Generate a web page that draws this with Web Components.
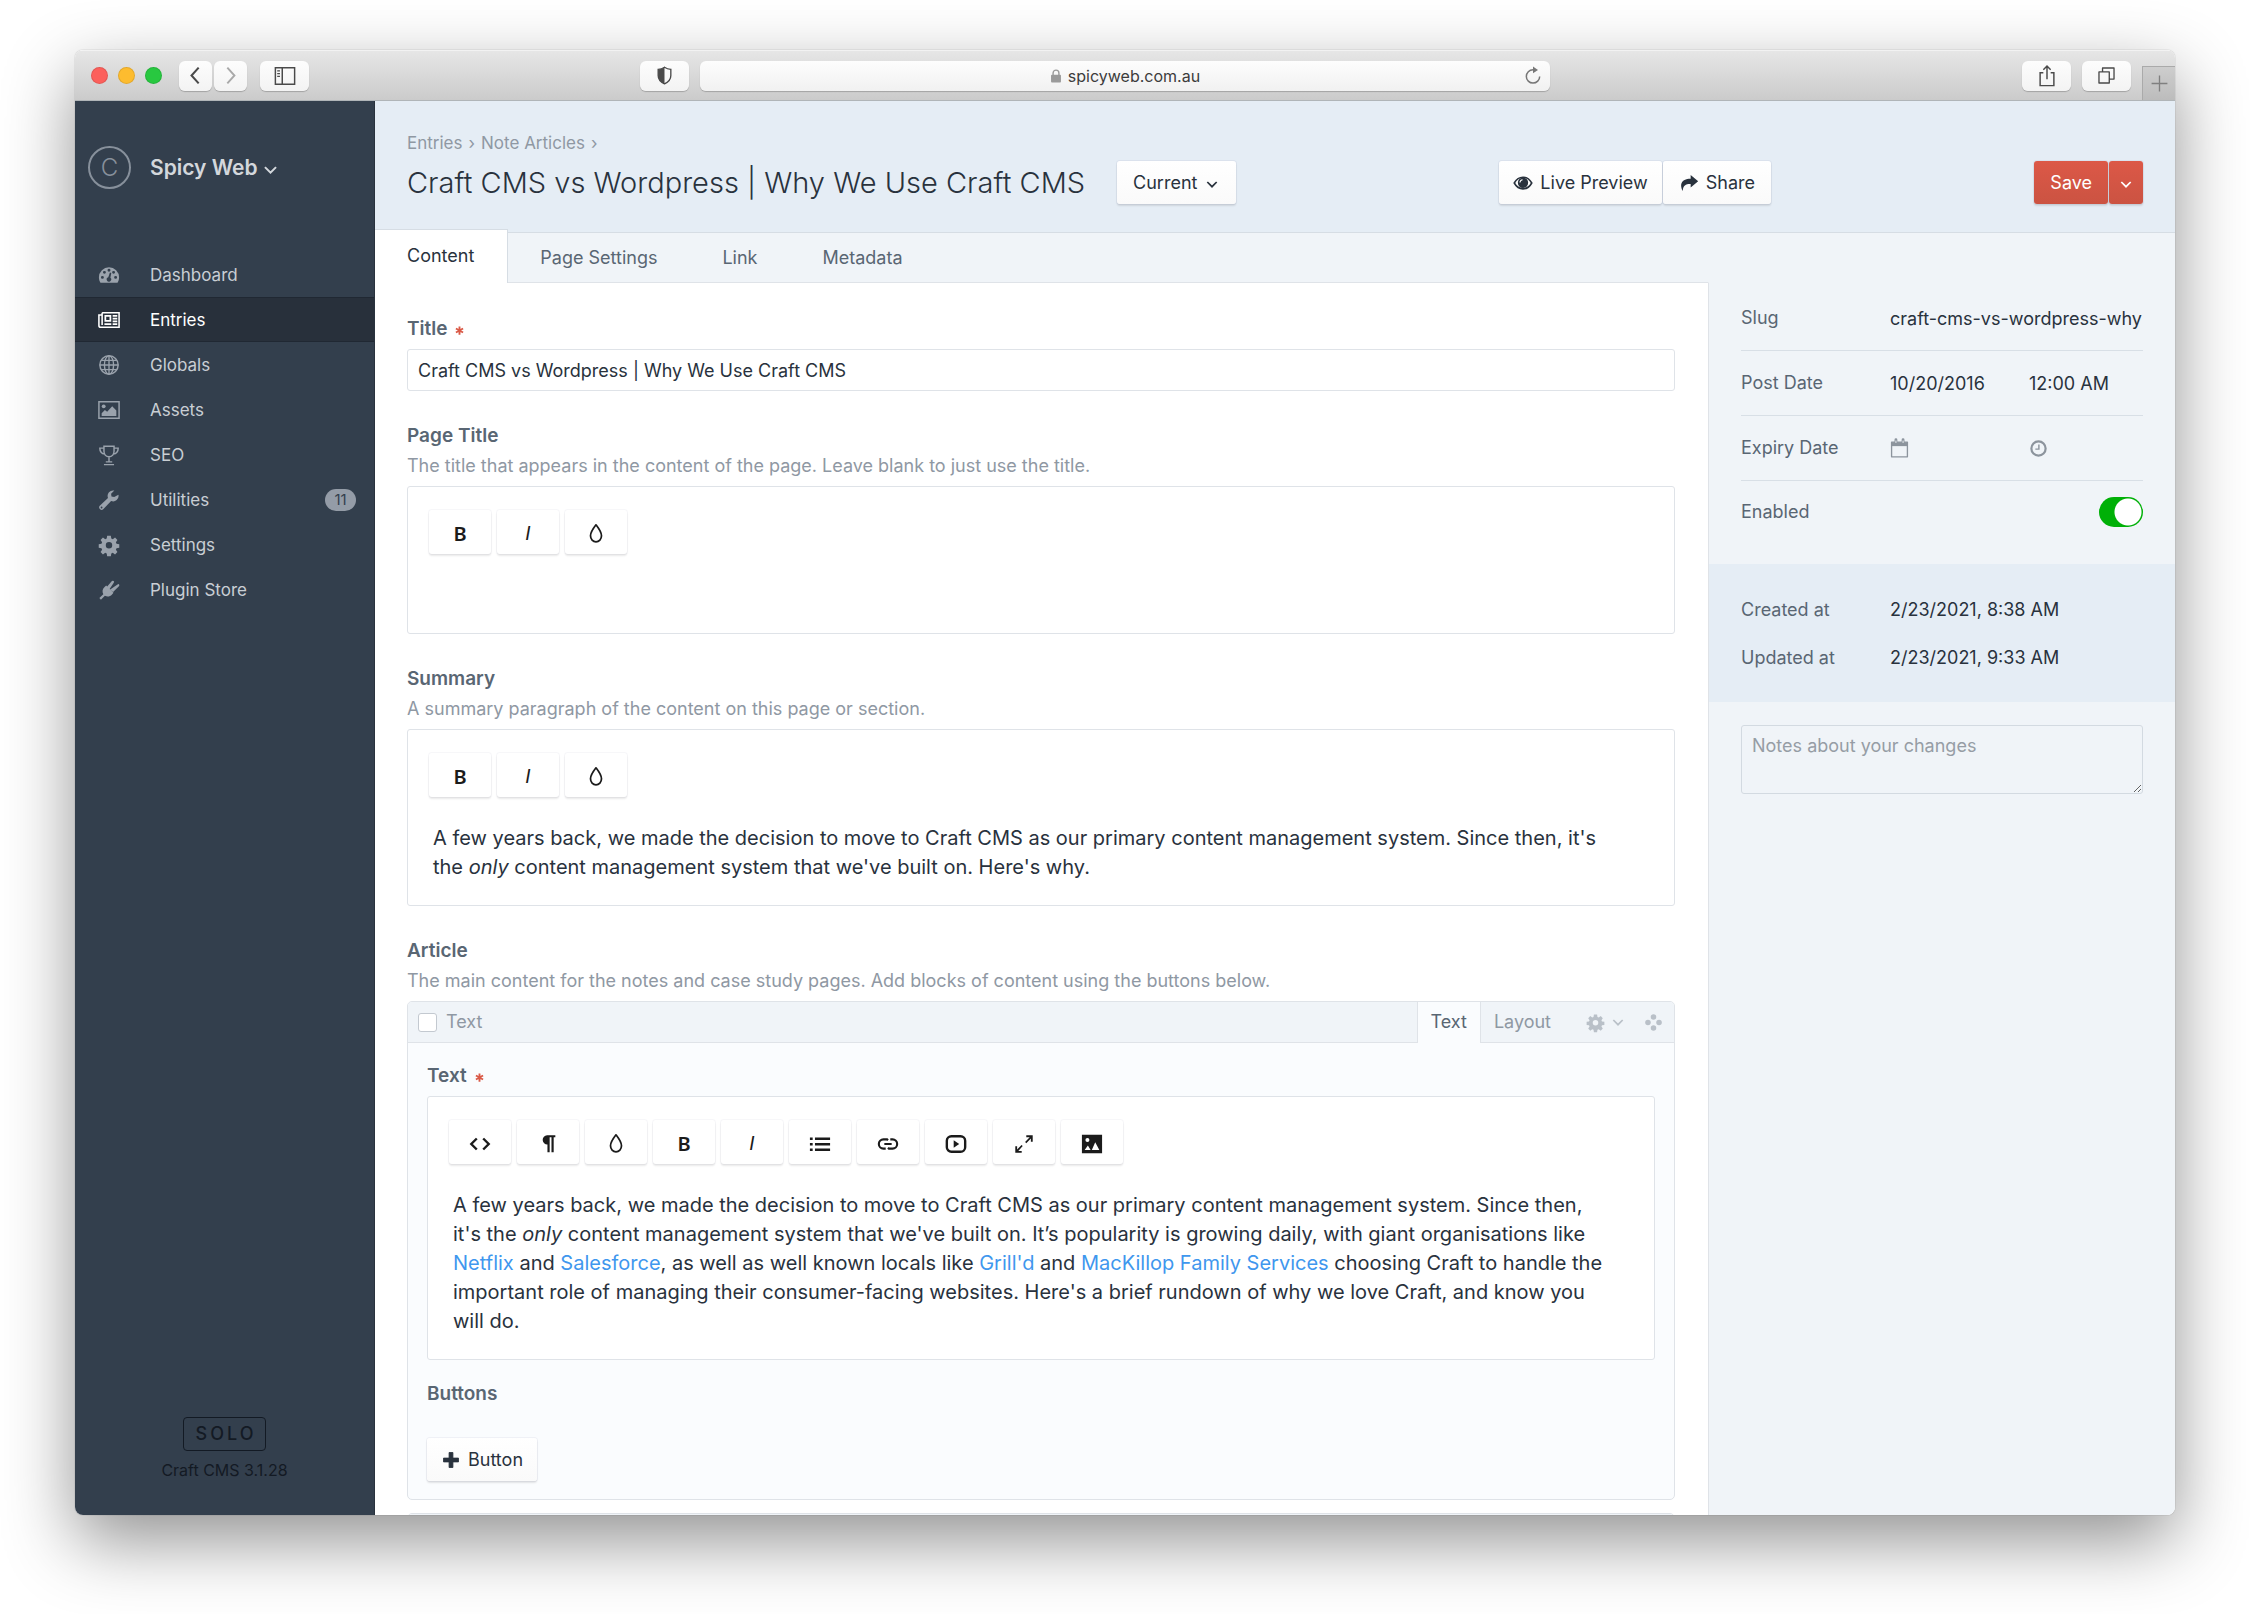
<!DOCTYPE html>
<html lang="en">
<head>
<meta charset="utf-8">
<title>Craft CMS vs Wordpress | Why We Use Craft CMS</title>
<style>
  :root {
    --ink: #29323d;
    --label: #596673;
    --muted: #8f98a3;
    --line: #dfe3e8;
    --panel: #f0f4f8;
    --band: #e5edf5;
    --link: #3f97ee;
    --ui: 18px;
    --body: 20px;
  }
  html, body { margin: 0; height: 100%; }
  body {
    box-sizing: border-box;
    padding: 50px 75px 99px;
    background: #fff;
    color: var(--ink);
    font: 400 var(--ui)/30px Inter, "Liberation Sans", sans-serif;
    overflow: hidden;
  }
</style>
</head>
<body>
<browser-window>
  <browser-toolbar slot="bar" address="spicyweb.com.au"></browser-toolbar>
  <app-sidebar site="Spicy Web" edition="SOLO" version="Craft CMS 3.1.28">
    <nav-item icon="gauge">Dashboard</nav-item>
    <nav-item icon="news" active>Entries</nav-item>
    <nav-item icon="globe">Globals</nav-item>
    <nav-item icon="photo">Assets</nav-item>
    <nav-item icon="trophy">SEO</nav-item>
    <nav-item icon="wrench" badge="11">Utilities</nav-item>
    <nav-item icon="gear">Settings</nav-item>
    <nav-item icon="plug">Plugin Store</nav-item>
  </app-sidebar>
  <entry-page>
    <page-header slot="header" heading="Craft CMS vs Wordpress | Why We Use Craft CMS"></page-header>
    <page-tabs slot="main"></page-tabs>
    <entry-form slot="main">
      <text-field label="Title" required value="Craft CMS vs Wordpress | Why We Use Craft CMS"></text-field>
      <rich-field label="Page Title" hint="The title that appears in the content of the page. Leave blank to just use the title." tools="bold italic drop"></rich-field>
      <rich-field label="Summary" hint="A summary paragraph of the content on this page or section." tools="bold italic drop">A few years back, we made the decision to move to Craft CMS as our primary content management system. Since then, it's the <em>only</em> content management system that we've built on. Here's why.</rich-field>
      <matrix-field label="Article" hint="The main content for the notes and case study pages. Add blocks of content using the buttons below.">
        <matrix-block heading="Text">
          <rich-field label="Text" required tools="code pilcrow drop bold italic list link video expand image">A few years back, we made the decision to move to Craft CMS as our primary content management system. Since then, it's the <em>only</em> content management system that we've built on. It’s popularity is growing daily, with giant organisations like <a href="#netflix">Netflix</a> and <a href="#salesforce">Salesforce</a>, as well as well known locals like <a href="#grilld">Grill'd</a> and <a href="#mackillop">MacKillop Family Services</a> choosing Craft to handle the important role of managing their consumer-facing websites. Here's a brief rundown of why we love Craft, and know you will do.</rich-field>
          <button-field label="Buttons"></button-field>
        </matrix-block>
        <matrix-block></matrix-block>
      </matrix-field>
    </entry-form>
    <entry-details slot="details"></entry-details>
  </entry-page>
</browser-window>

<script>
const BASE = `
  *, *::before, *::after { box-sizing: border-box; }
  :host { display: block; box-sizing: border-box; }
  :host([hidden]) { display: none; }
  button, input, textarea { font: inherit; color: inherit; margin: 0; padding: 0; border: 0; background: none; outline: 0; }
  a { color: inherit; text-decoration: none; }
`;

function element(name, render) {
  customElements.define(name, class extends HTMLElement {
    constructor() {
      super();
      this.attachShadow({ mode: 'open' });
    }
    connectedCallback() {
      if (this.shadowRoot.firstChild) return;
      const attr = (key) => this.getAttribute(key) || '';
      const { css, html } = render(attr, this);
      this.shadowRoot.innerHTML = `<style>${BASE}${css}</style>${html}`;
    }
  });
}

const GEAR = `<path fill-rule="evenodd" d="M10 2h4l.5 3 1.6.7 2.5-1.8 2.6 2.7-1.7 2.5.7 1.6 3 .5v3.8l-3 .5-.7 1.6 1.7 2.5-2.6 2.7-2.5-1.8-1.6.7-.5 3h-4l-.5-3-1.6-.7-2.5 1.8-2.6-2.7 1.7-2.5-.7-1.6-3-.5v-3.8l3-.5.7-1.6-1.7-2.5 2.6-2.7 2.500 1.800 1.600-.7zM12 8.800a3.500 3.500 0 1 0 0 7 3.500 3.500 0 0 0 0-7z"/>`;
const ICONS = {
  chevron: `<path d="M5 9l7 7 7-7" class="s" stroke-width="2.600"/>`,
  back: `<path d="M16 2L7 12l9 10" class="s" stroke-width="2.600"/>`,
  forward: `<path d="M8 2l9 10-9 10" class="s" stroke-width="2.400"/>`,
  sidebar: `<path d="M1.500 3h21v18h-21zM9 3v18" class="s" stroke-width="1.600"/><path d="M3.500 6.500h3M3.500 9.500h3M3.500 12.500h3" class="s" stroke-width="1.300"/>`,
  shield: `<path d="M12 1.500c2.500 1.700 5 2.500 8 2.700V12c0 5-3.500 8.500-8 10.500C7.500 20.500 4 17 4 12V4.200c3-.2 5.500-1 8-2.700z" class="s" stroke-width="1.700"/><path d="M12 1.500v21C7.500 20.500 4 17 4 12V4.200c3-.2 5.500-1 8-2.700z"/>`,
  lock: `<rect x="3.500" y="10" width="17" height="13" rx="1.500"/><path d="M7 11V7a5 5 0 0 1 10 0v4" class="s" stroke-width="2.400"/>`,
  reload: `<path d="M20 12.500a8 8 0 1 1-8-8h1.500" class="s" stroke-width="1.800"/><path d="M12 .5l6 4.300-6 4z"/>`,
  export: `<path d="M8 8.500H4.500V22.500h15V8.500H16M12 15.500V1.500M8 5.200l4-4 4 4" class="s" stroke-width="1.600"/>`,
  windows: `<path d="M2.500 7.500h13v14h-13zM7 7V2.500h14.500v14H16" class="s" stroke-width="1.700" stroke-linejoin="round"/>`,
  plusThin: `<path d="M12 2v20M2 12h20" class="s" stroke-width="1.700"/>`,
  gauge: `<path fill-rule="evenodd" d="M12 3.500A11 11 0 0 0 1 14.500c0 2.300.6 4.300 1.700 6h18.600c1.100-1.700 1.700-3.700 1.700-6A11 11 0 0 0 12 3.500zM4.800 13a1.600 1.600 0 1 1 0 3.200 1.600 1.600 0 0 1 0-3.200zM7 7.500a1.600 1.600 0 1 1 0 3.200 1.600 1.600 0 0 1 0-3.200zM12 5.200a1.600 1.600 0 1 1 0 3.200 1.600 1.600 0 0 1 0-3.200zM17 7.500a1.600 1.600 0 1 1 0 3.200 1.600 1.600 0 0 1 0-3.200zM19.200 13a1.600 1.600 0 1 1 0 3.200 1.600 1.600 0 0 1 0-3.200zM13 9.300l1.500.4-1 5.300a2.400 2.400 0 1 1-2.300-.5z"/>`,
  news: `<path d="M4.500 4H23v16H3a2 2 0 0 1-2-2V6.500h3.500M4.500 4v13.500" class="s" stroke-width="1.700"/><path d="M8 7.500h5.500V13H8z" class="s" stroke-width="1.900"/><path d="M7 16.500h7.500M16 7.500h5M16 10.500h5M16 13.500h5M16 16.500h5" class="s" stroke-width="1.700"/>`,
  globe: `<circle cx="12" cy="12" r="10" class="s" stroke-width="1.600"/><ellipse cx="12" cy="12" rx="5" ry="10" class="s" stroke-width="1.500"/><path d="M12 2v20M2 12h20M3.500 7h17M3.500 17h17" class="s" stroke-width="1.500"/>`,
  photo: `<path d="M1 3h22v18H1z" class="s" stroke-width="1.600"/><circle cx="6.200" cy="8" r="2.100"/><path d="M4 18.500v-3l3.500-3.500 2.500 2L15.500 8l4.500 4.500v6z"/>`,
  trophy: `<path d="M6.500 2.500h11V8c0 3.500-2.500 6-5.500 6s-5.500-2.500-5.500-6zM6.500 4.500H2c0 4 2 6 5.500 6.500M17.500 4.500H22c0 4-2 6-5.500 6.500M12 14v6M8.500 19.500h7M6.500 22.500h11" class="s" stroke-width="1.600"/>`,
  wrench: `<path fill-rule="evenodd" d="M22.300 6.200a6 6 0 0 1-8 6.900l-8.600 9a2.700 2.700 0 0 1-3.800-3.800l9-8.600a6 6 0 0 1 6.900-8l-3.500 3.500.4 3 3 .5zM3.900 19.200a1 1 0 1 0 0 2 1 1 0 0 0 0-2z"/>`,
  gear: GEAR,
  plug: `<path d="M1.500 20.800l4.300-4.300c-1.600-3-.9-5.500 1.400-7.800l1.700-1.600 8 8-1.600 1.700c-2.300 2.300-4.800 3-7.800 1.400l-4.300 4.300zM10 8.200l5.200-5.900a1.300 1.300 0 0 1 2 1.800l-4.500 6.800zM13.300 11.500l6.800-4.600 1.700-1.300a1.300 1.300 0 0 1 1 2.300l-6.300 6.200z"/>`,
  eye: `<path d="M1.500 12C4 7.500 7.800 5 12 5s8 2.500 10.500 7c-2.500 4.500-6.300 7-10.500 7s-8-2.500-10.500-7z" class="s" stroke-width="1.900"/><path fill-rule="evenodd" d="M12 5.500a6.200 6.200 0 1 0 0 12.400 6.200 6.200 0 0 0 0-12.400zM11.500 7.500v1.300A3 3 0 0 0 9 11.500H7.700a4.200 4.200 0 0 1 3.800-4z"/>`,
  share: `<path d="M14 2.500l9 7.500-9 7.500v-4.300C8.500 13 5 14.500 4.500 21.500 1 15 1.500 7 14 6.800z"/>`,
  drop: `<path d="M12 2c3.500 4.500 6 8.300 6 12a6 6.500 0 0 1-12 0c0-3.700 2.500-7.500 6-12z" class="s" stroke-width="1.900" stroke-linejoin="round"/>`,
  code: `<path d="M8.500 6l-6 6 6 6M15.500 6l6 6-6 6" class="s" stroke-width="2.600"/>`,
  pilcrow: `<path d="M11 2.500h9v2.200h-1.800V21h-2.400V4.700h-2V21h-2.400v-8.500A5 5 0 0 1 11 2.500z"/>`,
  list: `<path d="M6.500 5H23v2.500H6.500zM6.500 11H23v2.500H6.500zM6.500 17H23v2.500H6.500zM1 5h3v2.500H1zM1 11h3v2.500H1zM1 17h3v2.500H1z"/>`,
  link: `<path d="M9.500 17H7A5 5 0 0 1 7 7h4l1 1M14.500 7H17a5 5 0 0 1 0 10h-4l-1-1M8 12h8" class="s" stroke-width="2.300"/>`,
  video: `<rect x="2" y="3.500" width="20" height="17" rx="5" class="s" stroke-width="2.600"/><path d="M9.500 8l6 4-6 4z"/>`,
  expand: `<path d="M14.500 2.500h7v7h-2V6l-5 5.200-1.300-1.300L18.200 4.500h-3.700zM9.500 21.500h-7v-7h2V18l4.800-5 1.300 1.300-4.800 5.200h3.700z"/>`,
  image: `<path fill-rule="evenodd" d="M1 2h22v20H1zM7 5.500a2.200 2.200 0 1 0 0 4.400 2.200 2.200 0 0 0 0-4.400zM4 18.500h6.500l-3-5zM11.800 18.500H20L15.500 10z"/>`,
  calendar: `<path d="M2 4h20v18.500H2z" class="s" stroke-width="1.700" stroke-linejoin="round"/><path d="M2 4h20v5H2z"/><path d="M7.500 1v5M16.500 1v5" class="s" stroke-width="3.600" stroke-linecap="round"/><path d="M7.500 2v3M16.500 2v3" stroke="#f0f4f8" stroke-width="1.200"/>`,
  clock: `<circle cx="12" cy="12" r="9" class="s" stroke-width="2.800"/><path d="M12.500 7v5.800H8" class="s" stroke-width="1.800"/>`,
  move: `<circle cx="12" cy="5" r="3.500"/><circle cx="5" cy="12" r="3.500"/><circle cx="19" cy="12" r="3.500"/><circle cx="12" cy="19" r="3.500"/>`,
  plus: `<path d="M9.700 3h4.600v6.700H21v4.600h-6.700V21H9.700v-6.700H3V9.700h6.700z" stroke="currentColor" stroke-width="1" stroke-linejoin="round"/>`,
  asterisk: `<path d="M12 1v22M2.500 6.500l19 11M21.500 6.500l-19 11" class="s" stroke-width="5"/>`,
};

element('ui-icon', (attr) => ({
  css: `
    :host { display: inline-flex; flex: none; width: var(--size, 22px); height: var(--size, 22px); }
    svg { width: 100%; height: 100%; fill: currentColor; overflow: visible; }
    .s { fill: none; stroke: currentColor; }
  `,
  html: `<svg viewBox="0 0 24 24" aria-hidden="true">${ICONS[attr('name')]}</svg>`,
}));

/* ---------- Browser chrome ---------- */

element('browser-window', () => ({
  css: `
    :host { height: 100%; }
    .frame {
      display: flex; flex-direction: column; height: 100%;
      border-radius: 8px; overflow: hidden; background: #fff;
    }
    .shadow { height: 100%; border-radius: 8px; box-shadow: 0 0 1px rgba(0,0,0,.5), 0 26px 70px rgba(0,0,0,.43); }
    .view { flex: 1; min-height: 0; display: flex; }
    ::slotted(entry-page) { flex: 1; min-width: 0; }
  `,
  html: `<div class="shadow"><div class="frame"><slot name="bar"></slot><div class="view"><slot></slot></div></div></div>`,
}));

element('browser-toolbar', (attr) => ({
  css: `
    :host { height: 51px; flex: none; }
    .bar {
      display: grid; grid-template-columns: 1fr 850px 1fr; align-items: center; height: 100%;
      background: linear-gradient(#e6e6e6, #cbcbcb); border-top: 1px solid #f2f2f2; border-bottom: 1px solid #b0b5b8;
      color: #4a4a4a;
    }
    .lights { display: flex; align-items: center; gap: 10px; margin-right: 17px; }
    .lights button { width: 17px; height: 17px; border-radius: 50%; border: 1px solid rgba(0,0,0,.1); }
    .key {
      height: 30px; width: 49px; display: flex; align-items: center; justify-content: center; flex: none;
      border-radius: 6px; background: linear-gradient(#fdfdfd, #f3f3f3); box-shadow: 0 1px 1px rgba(0,0,0,.22);
    }
    .pair { display: flex; gap: 2px; margin-right: 13px; }
    .pair .key { width: 33px; }
    .pair .key + .key { color: #a9a9a9; }
    .left { display: flex; justify-content: space-between; padding: 0 11px 0 16px; }
    .left .group { display: flex; }
    .address {
      height: 30px; display: flex; align-items: center; padding-right: 7px;
      border-radius: 6px; background: linear-gradient(#fdfdfd, #f1f1f1); box-shadow: 0 1px 1px rgba(0,0,0,.22);
    }
    .address label { flex: 1; display: flex; align-items: center; justify-content: center; gap: 5px; padding-left: 26px; color: #9a9a9a; }
    .address input { field-sizing: content; font-size: 16px; line-height: 30px; color: #3c3c3c; }
    .address button { display: flex; color: #777; }
    .right { height: 100%; display: flex; justify-content: flex-end; align-items: center; gap: 11px; }
    .add {
      width: 33px; height: 34px; align-self: flex-end; display: flex; align-items: center; justify-content: center;
      background: rgba(0,0,0,.07); border-top: 1px solid #aaa; border-left: 1px solid #aaa; color: #808080;
    }
    .back { --size: 19px; } .shield { --size: 19px; } .reload { --size: 20px; } .lock { --size: 14px; }
  `,
  html: `<div class="bar">
    <div class="left">
      <div class="group">
        <div class="lights">
          <button aria-label="Close" style="background:#fc605c"></button>
          <button aria-label="Minimise" style="background:#fdbc2f"></button>
          <button aria-label="Zoom" style="background:#28c840"></button>
        </div>
        <div class="pair">
          <button class="key" aria-label="Back"><ui-icon class="back" name="back"></ui-icon></button>
          <button class="key" aria-label="Forward"><ui-icon class="back" name="forward"></ui-icon></button>
        </div>
        <button class="key" aria-label="Show sidebar"><ui-icon name="sidebar"></ui-icon></button>
      </div>
      <button class="key" aria-label="Privacy report"><ui-icon class="shield" name="shield"></ui-icon></button>
    </div>
    <div class="address">
      <label><ui-icon class="lock" name="lock"></ui-icon><input aria-label="Address" size="15" value="${attr('address')}"></label>
      <button aria-label="Reload"><ui-icon class="reload" name="reload"></ui-icon></button>
    </div>
    <div class="right">
      <button class="key" aria-label="Share page"><ui-icon name="export"></ui-icon></button>
      <button class="key" aria-label="Tab overview"><ui-icon class="shield" name="windows"></ui-icon></button>
      <button class="add" aria-label="New tab"><ui-icon class="shield" name="plusThin"></ui-icon></button>
    </div>
  </div>`,
}));

/* ---------- Sidebar ---------- */

element('app-sidebar', (attr) => ({
  css: `
    :host { width: 300px; flex: none; }
    .side {
      height: 100%; display: flex; flex-direction: column; padding: 45px 0 33px;
      background: #333f4d; border-right: 1px solid #29323d; color: #c9ced4;
    }
    .site { display: flex; align-items: center; height: 43px; margin: 0 13px 63px; font-size: 21px; font-weight: 600; color: #d3d7dc; }
    .mark {
      width: 43px; height: 43px; margin-right: 19px; border: 2px solid #87909b; border-radius: 50%;
      display: flex; align-items: center; justify-content: center; font-weight: 300; font-size: 24px; color: #87909b;
    }
    .site ui-icon { --size: 19px; margin: 4px 0 0 3px; }
    .foot { margin-top: auto; display: flex; flex-direction: column; align-items: center; gap: 7px; color: #131a24; font-size: 16px; line-height: 24px; }
    .foot b { padding: 4px 9px 4px 12px; border: 1px solid #131a24; border-radius: 4px; font-size: 18px; font-weight: 500; letter-spacing: 3px; }
  `,
  html: `<div class="side">
    <a class="site" href="#site"><span class="mark">C</span>${attr('site')}<ui-icon name="chevron"></ui-icon></a>
    <nav><slot></slot></nav>
    <div class="foot"><b>${attr('edition')}</b><span>${attr('version')}</span></div>
  </div>`,
}));

element('nav-item', (attr) => ({
  css: `
    a { display: flex; align-items: center; height: 45px; padding: 0 18px 0 23px; border: solid transparent; border-width: 1px 0; font-size: 17px; }
    ui-icon { color: #9aa2ac; margin-right: 30px; }
    :host([active]) a { background: #28303b; border-color: #202833; color: #fff; }
    :host([active]) ui-icon { color: #fff; }
    .badge { margin-left: auto; min-width: 31px; height: 22px; padding: 0 8px; border-radius: 11px; background: #949ca7; color: #333f4d; font-size: 15px; line-height: 22px; text-align: center; }
  `,
  html: `<a href="#${attr('icon')}"><ui-icon name="${attr('icon')}"></ui-icon><slot></slot>${attr('badge') ? `<span class="badge">${attr('badge')}</span>` : ''}</a>`,
}));

/* ---------- Page layout ---------- */

element('entry-page', () => ({
  css: `
    .page { height: 100%; display: flex; flex-direction: column; background: var(--panel); }
    .columns { flex: 1; min-height: 0; display: flex; }
    .main { flex: 1; min-width: 0; display: flex; flex-direction: column; }
    .details { width: 466px; flex: none; }
  `,
  html: `<div class="page"><slot name="header"></slot><div class="columns"><div class="main"><slot name="main"></slot></div><div class="details"><slot name="details"></slot></div></div></div>`,
}));

element('ui-button', (attr) => ({
  css: `
    button {
      display: flex; align-items: center; justify-content: center; gap: 7px; height: 43px; padding: 0 var(--pad, 16px);
      border-radius: 3px; background: linear-gradient(#fff, #fafafa); white-space: nowrap;
      box-shadow: 0 0 0 1px rgba(49,49,93,.05), 0 2px 2px rgba(0,0,0,.1);
    }
    ui-icon { --size: 20px; }
    .caret { --size: 16px; margin-top: 3px; }
    :host([primary]) button { background: linear-gradient(#dc5847, #cb5342); color: #fff; }
  `,
  html: `<button${attr('label') ? ` aria-label="${attr('label')}"` : ''}>${attr('icon') ? `<ui-icon name="${attr('icon')}"></ui-icon>` : ''}<slot></slot>${attr('caret') ? '<ui-icon class="caret" name="chevron"></ui-icon>' : ''}</button>`,
}));

element('page-header', (attr) => ({
  css: `
    header { padding: 28px 32px; background: var(--band); border-bottom: 1px solid #d6dde4; }
    .crumbs { display: flex; gap: 6px; line-height: 28px; font-size: 17px; color: var(--muted); margin-bottom: 4px; }
    .row { display: flex; align-items: center; height: 43px; }
    .heading { flex: 1; min-width: 0; display: flex; align-items: center; gap: 32px; }
    h1 { margin: 0; font-size: 29px; line-height: 43px; font-weight: 300; white-space: nowrap; }
    .group { display: flex; gap: 1px; }
    .save { width: 372px; justify-content: flex-end; }
  `,
  html: `<header>
    <nav class="crumbs"><a href="#entries">Entries</a><span>›</span><a href="#notes">Note Articles</a><span>›</span></nav>
    <div class="row">
      <div class="heading"><h1>${attr('heading')}</h1><ui-button caret="yes">Current</ui-button></div>
      <div class="group"><ui-button icon="eye" style="--pad:14px">Live Preview</ui-button><ui-button icon="share">Share</ui-button></div>
      <div class="group save"><ui-button primary>Save</ui-button><ui-button primary caret="yes" label="More save options" style="--pad:9px"></ui-button></div>
    </div>
  </header>`,
}));

element('page-tabs', () => ({
  css: `
    :host { flex: none; }
    nav { display: flex; height: 50px; border-bottom: 1px solid var(--line); border-right: 1px solid transparent; line-height: 49px; color: var(--label); font-size: 18px; }
    a { padding: 0 33px 0 32px; }
    .on { margin: -4px 0 -1px; padding-bottom: 1px; background: #fff; color: var(--ink); border: solid #d6dde4; border-width: 1px 1px 0 0; line-height: 52px; }
  `,
  html: `<nav><a class="on" href="#content">Content</a><a href="#settings">Page Settings</a><a href="#link">Link</a><a href="#metadata">Metadata</a></nav>`,
}));

element('entry-form', () => ({
  css: `
    :host { flex: 1; min-height: 0; }
    form { height: 100%; overflow: hidden; display: flex; flex-direction: column; gap: 30px; padding: 31px 33px 0 32px; background: #fff; border-right: 1px solid var(--line); }
    ::slotted(*) { flex: none; }
  `,
  html: `<form><slot></slot></form>`,
}));

/* ---------- Fields ---------- */

const FIELD = `
  .label { display: flex; align-items: center; gap: 8px; font-size: 19px; font-weight: 600; color: var(--label); line-height: 30px; }
  .label ui-icon { --size: 9px; color: #da5a47; margin-top: 3px; }
  .hint { color: var(--muted); line-height: 30px; }
  .box { margin-top: 5px; border: 1px solid var(--line); border-radius: 3px; background: #fff; }
`;
const star = (host) => host.hasAttribute('required') ? '<ui-icon name="asterisk"></ui-icon>' : '';
const hint = (attr) => attr('hint') ? `<div class="hint">${attr('hint')}</div>` : '';

element('text-field', (attr, host) => ({
  css: `${FIELD} input.box { display: block; width: 100%; height: 42px; padding: 0 10px; }`,
  html: `<label class="label" for="field">${attr('label')}${star(host)}</label><input class="box" id="field" value="${attr('value')}">`,
}));

element('tool-button', (attr) => ({
  css: `
    button { width: 62px; height: 44px; padding-top: 3px; display: flex; align-items: center; justify-content: center; border-radius: 3px; background: #fff; color: #1b1b1b; box-shadow: 0 0 0 1px rgba(49,49,93,.04), 0 2px 2px rgba(0,0,0,.09); }
    .bold, .italic { font: 600 20px/41px "Noto Sans", sans-serif; }
    .italic { font-family: Roboto, sans-serif; font-style: italic; font-weight: 400; }
  `,
  html: `<button type="button" aria-label="${attr('name')}">${
    { bold: '<span class="bold">B</span>', italic: '<span class="italic">I</span>' }[attr('name')] || `<ui-icon name="${attr('name')}"></ui-icon>`
  }</button>`,
}));

element('rich-field', (attr, host) => ({
  css: `${FIELD}
    .box { padding: 23px 44px 23px 21px; }
    .tools { display: flex; gap: 6px; margin-bottom: 27px; }
    .text { min-height: 29px; margin-left: 4px; font-size: var(--body); line-height: 29px; outline: 0; }
    .text.empty { height: 29px; }
    ::slotted(a) { color: var(--link); text-decoration: none; }
  `,
  html: `<div class="label" id="label">${attr('label')}${star(host)}</div>${hint(attr)}
    <div class="box">
      <div class="tools">${attr('tools').split(' ').map((name) => `<tool-button name="${name}"></tool-button>`).join('')}</div>
      <div class="text${host.textContent.trim() ? '' : ' empty'}" role="textbox" aria-multiline="true" aria-labelledby="label" contenteditable="true"><slot></slot></div>
    </div>`,
}));

element('button-field', (attr) => ({
  css: `${FIELD} :host { margin-top: 19px; } .label { margin-bottom: 29px; } .row { display: flex; }`,
  html: `<div class="label">${attr('label')}</div><div class="row"><ui-button icon="plus" style="--pad:14px">Button</ui-button></div>`,
}));

element('matrix-field', (attr) => ({
  css: `${FIELD} .blocks { margin-top: 5px; display: flex; flex-direction: column; gap: 13px; }`,
  html: `<div class="label">${attr('label')}</div>${hint(attr)}<div class="blocks"><slot></slot></div>`,
}));

element('matrix-block', (attr) => ({
  css: `
    .card { border: 1px solid var(--line); border-radius: 5px; background: #fafcfe; }
    .bar { display: flex; align-items: stretch; height: 41px; background: var(--panel); border-bottom: 1px solid var(--line); border-radius: 4px 4px 0 0; line-height: 40px; color: var(--muted); }
    .bar label { flex: 1; display: flex; align-items: center; gap: 9px; padding-left: 10px; }
    input { appearance: none; width: 19px; height: 19px; border: 1px solid #c3c9d0; border-radius: 3px; background: #fff; }
    .bar a { padding: 0 13px; }
    .bar .on { margin-bottom: -1px; background: #fafcfe; color: var(--label); border: solid var(--line); border-width: 0 1px; }
    .icons { display: flex; align-items: center; gap: 8px; padding: 0 11px 0 22px; color: #b9c0c8; }
    .icons button { display: flex; align-items: center; gap: 5px; }
    .icons button + button { margin-left: 10px; }
    .icons ui-icon { --size: 19px; }
    .icons .caret { --size: 16px; }
    .body { padding: 18px 19px; }
  `,
  html: `<div class="card">
    <div class="bar">
      <label><input type="checkbox" aria-label="Select block">${attr('heading')}</label>
      ${attr('heading') ? `<a class="on" href="#block-text">Text</a><a href="#block-layout">Layout</a>
      <div class="icons"><button type="button" aria-label="Block actions"><ui-icon name="gear"></ui-icon><ui-icon class="caret" name="chevron"></ui-icon></button><button type="button" aria-label="Reorder"><ui-icon name="move"></ui-icon></button></div>` : ''}
    </div>
    <div class="body"><slot></slot></div>
  </div>`,
}));

/* ---------- Details panel ---------- */

element('entry-details', () => ({
  css: `
    .rows { padding: 53px 32px 0; }
    .row { display: flex; align-items: center; height: 65px; border-bottom: 1px solid #d8dfe6; }
    .row.last { height: 62px; border: 0; justify-content: space-between; }
    .name { width: 149px; flex: none; color: var(--label); }
    .row input[type=text] { width: 139px; height: 40px; }
    .row input.date { flex: none; }
    .row input.wide { flex: 1; min-width: 0; width: auto; }
    .pick { width: 139px; flex: none; display: flex; color: #8c949d; }
    .pick + .pick { flex: 0 1 auto; }
    .pick ui-icon { --size: 19px; }
    .switch { appearance: none; width: 44px; height: 30px; border-radius: 15px; background: radial-gradient(circle at 29px 50%, #fff 13px, #00b007 14px); }
    .meta { margin-top: 21px; padding: 22px 32px 20px; background: var(--band); }
    .meta div { display: flex; align-items: center; height: 48px; }
    .notes { padding: 23px 32px; }
    textarea { display: block; width: 100%; height: 69px; padding: 5px 10px; border: 1px solid #d3dae1; border-radius: 3px; line-height: 30px; }
    textarea::placeholder { color: #969da5; opacity: 1; }
  `,
  html: `
    <div class="rows">
      <div class="row"><label class="name" for="slug">Slug</label><input class="wide" type="text" id="slug" value="craft-cms-vs-wordpress-why"></div>
      <div class="row"><label class="name" for="post">Post Date</label><input class="date" type="text" id="post" value="10/20/2016"><input type="text" aria-label="Post time" value="12:00 AM"></div>
      <div class="row"><span class="name">Expiry Date</span><button class="pick" aria-label="Expiry date"><ui-icon name="calendar"></ui-icon></button><button class="pick" aria-label="Expiry time"><ui-icon name="clock"></ui-icon></button></div>
      <div class="row last"><label class="name" for="enabled">Enabled</label><input class="switch" type="checkbox" role="switch" id="enabled" checked></div>
    </div>
    <div class="meta">
      <div><span class="name">Created at</span><span>2/23/2021, 8:38 AM</span></div>
      <div><span class="name">Updated at</span><span>2/23/2021, 9:33 AM</span></div>
    </div>
    <div class="notes"><textarea aria-label="Notes about your changes" placeholder="Notes about your changes"></textarea></div>`,
}));
</script>
</body>
</html>
